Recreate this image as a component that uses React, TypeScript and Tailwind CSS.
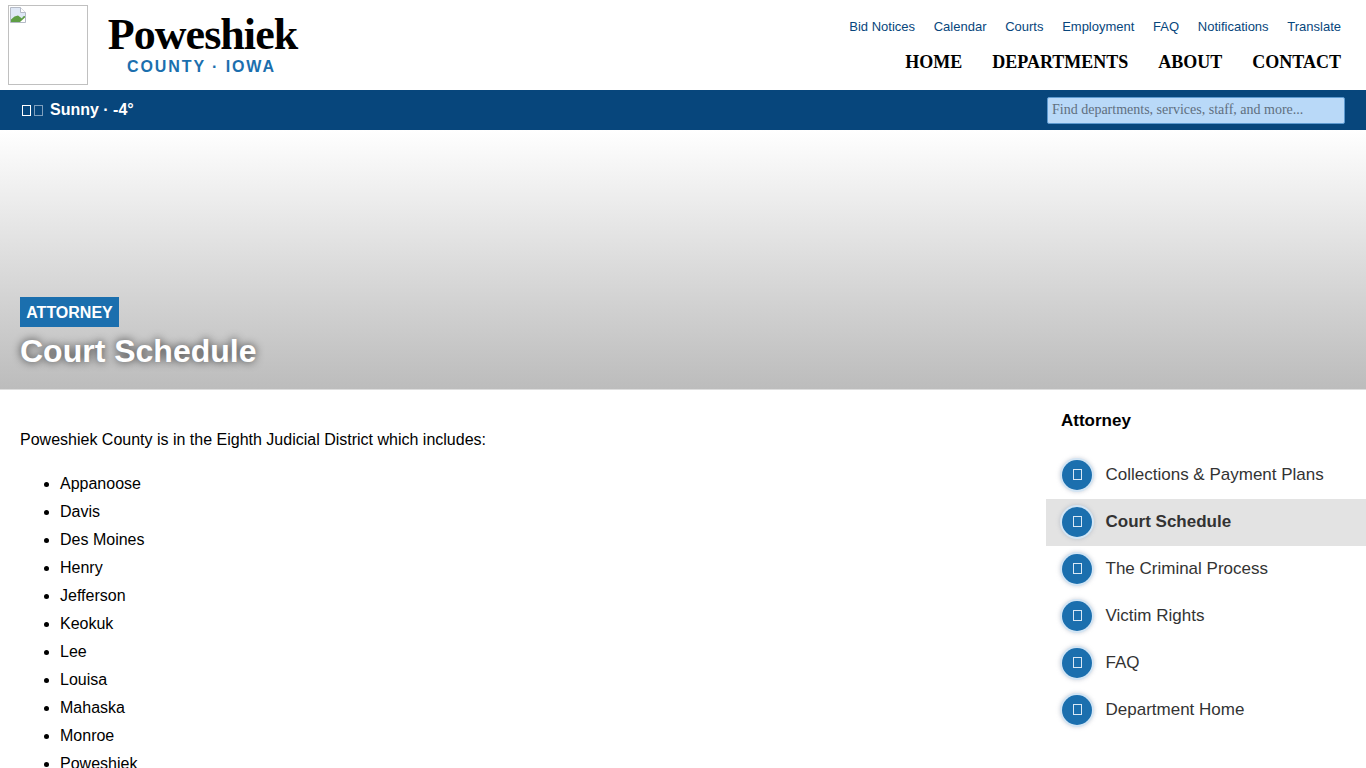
import React from "react";

const sans = "font-['Liberation_Sans',Arial,sans-serif]";
const serif = "font-['Liberation_Serif','Times_New_Roman',serif]";

const topLinks = ["Bid Notices", "Calendar", "Courts", "Employment", "FAQ", "Notifications", "Translate"];
const mainLinks = ["HOME", "DEPARTMENTS", "ABOUT", "CONTACT"];
const counties = ["Appanoose", "Davis", "Des Moines", "Henry", "Jefferson", "Keokuk", "Lee", "Louisa", "Mahaska", "Monroe", "Poweshiek"];
const side = ["Collections & Payment Plans", "Court Schedule", "The Criminal Process", "Victim Rights", "FAQ", "Department Home"];

function BrokenImage() {
  return (
    <svg width="16" height="16" viewBox="0 0 16 16" className="block">
      <path d="M0.5 0.5H10.5L15.5 5.5V15.5H0.5Z" fill="#dfe8f6" stroke="#b4bac6" />
      <path d="M10.5 0.5V5.5H15.5" fill="#fff" stroke="#b4bac6" />
      <path d="M1 15V12.5L4.5 9.5L8 8.5L12 11.5L13 9.5L15 9V13L14 15Z" fill="#5f9e45" />
      <path d="M10 15L15 10.5V15Z" fill="#fff" />
    </svg>
  );
}

export default function App() {
  return (
    <div className={`h-[768px] overflow-hidden bg-white text-black ${sans}`}>
      <header className="flex h-[90px] justify-between pl-2 pr-[25px]">
        <div className="flex">
          <div className="mt-[5px] h-[80px] w-[80px] border border-[#c0c0c0] pl-px pt-px">
            <BrokenImage />
          </div>
          <div className="ml-5 flex w-[189px] flex-col items-center pt-[9px]">
            <div className={`${serif} whitespace-nowrap text-[44px] font-bold leading-[52px] tracking-[-0.95px]`}>Poweshiek</div>
            <div className="mt-[-3px] mr-[2px] whitespace-nowrap text-base font-bold leading-[18px] tracking-[1.9px] text-[#1b6fae]">COUNTY · IOWA</div>
          </div>
        </div>
        <div className="flex flex-col items-end">
          <nav className="mt-[19px] flex gap-[18.7px] text-[13px] leading-4 text-[#07467c]">
            {topLinks.map((l) => (
              <span key={l}>{l}</span>
            ))}
          </nav>
          <nav className={`${serif} mt-[15px] flex gap-[30px] text-lg font-bold leading-6`}>
            {mainLinks.map((l) => (
              <span key={l}>{l}</span>
            ))}
          </nav>
        </div>
      </header>

      <div className="flex h-10 items-center justify-between bg-[#07467c] pl-[22px] pr-[21px]">
        <div className="flex items-center text-base font-bold text-white">
          <span className="h-[11px] w-[9px] border border-white" />
          <span className="ml-[3px] h-[11px] w-[9px] border border-[#7f9fbd]" />
          <span className="ml-[7px]">Sunny · -4°</span>
        </div>
        <div className={`${serif} flex h-[27px] w-[298px] items-center rounded-[2px] border border-[#5d9ad0] bg-[#b9d9f8] pl-1 text-sm text-[#5f6f80]`}>
          Find departments, services, staff, and more...
        </div>
      </div>

      <section className="flex h-[260px] flex-col items-start justify-end border-b border-[#dddddd] bg-gradient-to-b from-white to-[#bcbcbc] pb-[18px] pl-5">
        <div className="flex h-[30px] w-[99px] items-center justify-center bg-[#1b6fae] pt-px text-base font-bold text-white">ATTORNEY</div>
        <h1 className="mt-[4px] text-[32px] font-bold leading-[40px] text-white [text-shadow:0_0_8px_rgba(0,0,0,0.75)]">Court Schedule</h1>
      </section>

      <main className="flex">
        <div className="flex-1 pl-5 pt-[40px] text-base leading-5">
          <p>Poweshiek County is in the Eighth Judicial District which includes:</p>
          <ul className="mt-[24px] list-disc pl-10">
            {counties.map((c) => (
              <li key={c} className="mb-2 leading-5">
                {c}
              </li>
            ))}
          </ul>
        </div>
        <aside className="w-[320px] shrink-0">
          <h2 className="ml-[15px] mt-[21px] text-[17px] font-bold leading-5">Attorney</h2>
          <ul className="mt-[21px] text-[17px] text-[#333333]">
            {side.map((s) => {
              const active = s === "Court Schedule";
              return (
                <li key={s} className={`flex h-[47px] items-center pb-[2px] pl-[16px] ${active ? "bg-[#e3e3e3] font-bold" : ""}`}>
                  <span className="flex h-[30px] w-[30px] items-center justify-center rounded-full bg-[#1b6fae] shadow-[0_0_0_2px_#d3e5f4,0_0_4px_2px_rgba(130,140,160,0.4)]">
                    <span className="h-[11px] w-[9px] border border-[#d9e8f5]" />
                  </span>
                  <span className="ml-[13.5px] whitespace-nowrap">{s}</span>
                </li>
              );
            })}
          </ul>
        </aside>
      </main>
    </div>
  );
}
